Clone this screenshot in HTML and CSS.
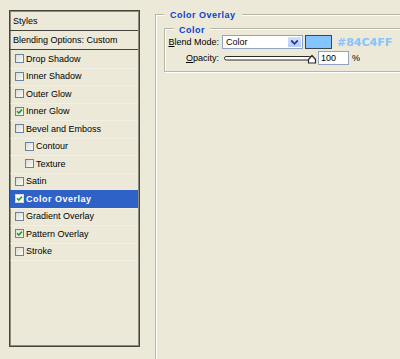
FILE: index.html
```html
<!DOCTYPE html>
<html>
<head>
<meta charset="utf-8">
<link rel="stylesheet" href="styles.css">
</head>
<body>
<div class="dialog">
  <div class="styles-list">
    <div class="hdr hdr-top">Styles</div>
    <div class="hdr">Blending Options: Custom</div>
    <div class="item"><span class="cb"></span>Drop Shadow</div>
    <div class="item"><span class="cb"></span>Inner Shadow</div>
    <div class="item"><span class="cb"></span>Outer Glow</div>
    <div class="item"><span class="cb on"><svg viewBox="0 0 7 7" width="7" height="7"><path d="M1 3.2 L2.8 5 L6 1.6" fill="none" stroke="#21a121" stroke-width="1.6"/></svg></span>Inner Glow</div>
    <div class="item"><span class="cb"></span>Bevel and Emboss</div>
    <div class="item sub"><span class="cb"></span>Contour</div>
    <div class="item sub"><span class="cb"></span>Texture</div>
    <div class="item"><span class="cb"></span>Satin</div>
    <div class="item selected"><span class="cb on white"><svg viewBox="0 0 7 7" width="7" height="7"><path d="M1 3.2 L2.8 5 L6 1.6" fill="none" stroke="#21a121" stroke-width="1.6"/></svg></span>Color Overlay</div>
    <div class="item"><span class="cb"></span>Gradient Overlay</div>
    <div class="item"><span class="cb on"><svg viewBox="0 0 7 7" width="7" height="7"><path d="M1 3.2 L2.8 5 L6 1.6" fill="none" stroke="#21a121" stroke-width="1.6"/></svg></span>Pattern Overlay</div>
    <div class="item"><span class="cb"></span>Stroke</div>
  </div>

  <div class="group outer">
    <span class="group-title outer-title">Color Overlay</span>
    <div class="group inner">
      <span class="group-title inner-title">Color</span>
      <div class="form">
        <span class="lbl"><u>B</u>lend Mode:</span>
        <div class="ctrls">
          <div class="select">
            <span class="select-val">Color</span>
            <span class="select-btn"><svg viewBox="0 0 9 7" width="9" height="7"><path d="M1.2 1.5 L4.5 4.8 L7.8 1.5" fill="none" stroke="#1f3f9c" stroke-width="1.8"/></svg></span>
          </div>
          <span class="swatch"></span>
          <span class="hex">#84C4FF</span>
        </div>
        <span class="lbl"><u>O</u>pacity:</span>
        <div class="ctrls">
          <svg class="slider" viewBox="0 0 94 11" width="94" height="11">
            <rect x="0.5" y="3.5" width="87" height="3.5" rx="1.7" fill="#fff" stroke="#2b2b26" stroke-width="1"/>
            <path d="M84.5 10 L84.5 6.5 L88 2.5 L91.5 6.5 L91.5 10 Z" fill="#fff" stroke="#2b2b26" stroke-width="1.2" stroke-linejoin="round"/>
          </svg>
          <span class="num">100</span>
          <span class="pct">%</span>
        </div>
      </div>
    </div>
  </div>
</div>
</body>
</html>
```

FILE: styles.css
```css
html, body {
  margin: 0;
  padding: 0;
}
body {
  width: 400px;
  height: 359px;
  overflow: hidden;
  background: #ece9d8;
  font-family: "Liberation Sans", Arial, sans-serif;
  font-size: 9px;
  color: #000;
}
.dialog {
  display: flex;
  align-items: flex-start;
  padding: 10px 0 0 9px;
  gap: 15px;
}
.styles-list {
  box-sizing: border-box;
  flex: 0 0 131px;
  height: 337px;
  border: 1px solid #45443d;
  box-shadow: inset 1px 1px 0 #8d8b80, inset -1px -1px 0 #8d8b80;
  display: flex;
  flex-direction: column;
  padding: 1px 1px 0 0;
}
.hdr {
  height: 18px;
  line-height: 18px;
  padding-left: 3px;
  border-bottom: 1px solid #45443d;
}
.hdr-top {
  height: 18px;
}
.item {
  height: 17.5px;
  display: flex;
  align-items: center;
  gap: 2px;
  padding-left: 5px;
  box-shadow: 0 1px 0 rgba(255, 255, 255, 0.35);
}
.item.sub {
  padding-left: 15px;
}
.item.selected {
  background: #2f62c6;
  color: #fff;
  font-weight: bold;
  letter-spacing: 0.5px;
}
.cb {
  box-sizing: border-box;
  width: 9px;
  height: 9px;
  border: 1px solid #6c819c;
  background: linear-gradient(135deg, #dcdcd4, #fbfbf8);
  display: flex;
  align-items: center;
  justify-content: center;
}
.cb.white {
  background: #fff;
  border-color: #cfd8ea;
}
.group {
  position: relative;
  border: 1px solid #b9b6a7;
  box-shadow: inset 1px 1px 0 #fff, 1px 1px 0 #fff;
}
.outer {
  flex: 1 0 auto;
  margin-top: 4px;
  margin-right: -20px;
  height: 332px;
  padding: 13px 0 0 8px;
}
.group-title {
  position: absolute;
  background: #ece9d8;
  color: #0a3fcf;
  font-weight: bold;
  letter-spacing: 0.5px;
  line-height: 10px;
}
.outer-title {
  top: -5px;
  left: 8px;
  padding: 0 6px 0 6px;
}
.inner-title {
  top: -4px;
  left: 9px;
  padding: 0 5px;
}
.inner {
  height: 36px;
  padding: 6px 0 0 3px;
}
.form {
  display: grid;
  grid-template-columns: 51px auto;
  column-gap: 3px;
  row-gap: 2px;
  align-items: center;
}
.lbl {
  justify-self: end;
  white-space: nowrap;
}
.ctrls {
  display: flex;
  align-items: center;
  height: 14px;
}
.select {
  box-sizing: border-box;
  width: 81px;
  height: 14px;
  background: #fff;
  border: 1px solid #8ea4c1;
  display: flex;
  align-items: center;
  justify-content: space-between;
  padding: 1px;
}
.select-val {
  padding-left: 2px;
}
.select-btn {
  width: 13px;
  height: 10px;
  background: linear-gradient(#d6e2fc, #b7cbf7);
  display: flex;
  align-items: center;
  justify-content: center;
}
.swatch {
  box-sizing: border-box;
  width: 27px;
  height: 14px;
  margin-left: 2px;
  background: #84c4ff;
  border: 1px solid #3a4652;
}
.hex {
  margin-left: 5px;
  font-family: "DejaVu Sans", sans-serif;
  font-weight: bold;
  font-size: 11px;
  color: #84c4ff;
}
.slider {
  display: block;
  margin-left: 2px;
}
.num {
  box-sizing: border-box;
  width: 31px;
  height: 14px;
  background: #fff;
  border: 1px solid #8ea4c1;
  line-height: 12px;
  padding-left: 2px;
}
.pct {
  margin-left: 3px;
}
```
